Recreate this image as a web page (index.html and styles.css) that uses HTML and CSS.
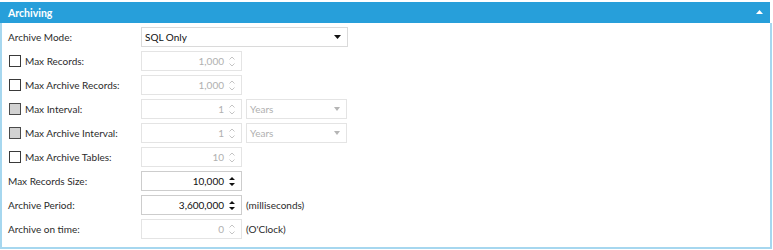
FILE: index.html
```html
<!DOCTYPE html>
<html>
<head>
	<meta charset="utf-8">
	<link rel="stylesheet" href="styles.css">
</head>
<body>
	<div class="panel">
		<div class="panel-head">
			<span>Archiving</span>
			<svg class="collapse" width="7" height="4" viewBox="0 0 7 4"><path d="M0 4 L3.5 0 L7 4 Z" fill="#fff"/></svg>
		</div>
		<div class="panel-body">
			<div class="row">
				<label class="lbl">Archive Mode:</label>
				<div class="select wide">
					<span>SQL Only</span>
					<svg width="7" height="4" viewBox="0 0 7 4"><path d="M0 0 L7 0 L3.5 4 Z" fill="#111"/></svg>
				</div>
			</div>
			<div class="row">
				<label class="lbl"><span class="check"></span>Max Records:</label>
				<div class="spin off">
					<span class="val">1,000</span>
					<svg width="6" height="11" viewBox="0 0 6 11"><path d="M0.5 3.5 L3 1 L5.5 3.5 M0.5 7.5 L3 10 L5.5 7.5" fill="none" stroke="#c4c4c4"/></svg>
				</div>
			</div>
			<div class="row">
				<label class="lbl"><span class="check"></span>Max Archive Records:</label>
				<div class="spin off">
					<span class="val">1,000</span>
					<svg width="6" height="11" viewBox="0 0 6 11"><path d="M0.5 3.5 L3 1 L5.5 3.5 M0.5 7.5 L3 10 L5.5 7.5" fill="none" stroke="#c4c4c4"/></svg>
				</div>
			</div>
			<div class="row">
				<label class="lbl"><span class="check grey"></span>Max Interval:</label>
				<div class="spin off">
					<span class="val">1</span>
					<svg width="6" height="11" viewBox="0 0 6 11"><path d="M0.5 3.5 L3 1 L5.5 3.5 M0.5 7.5 L3 10 L5.5 7.5" fill="none" stroke="#c4c4c4"/></svg>
				</div>
				<div class="select unit off">
					<span>Years</span>
					<svg width="6" height="4" viewBox="0 0 6 4"><path d="M0 0 L6 0 L3 4 Z" fill="#b5b5b5"/></svg>
				</div>
			</div>
			<div class="row">
				<label class="lbl"><span class="check grey"></span>Max Archive Interval:</label>
				<div class="spin off">
					<span class="val">1</span>
					<svg width="6" height="11" viewBox="0 0 6 11"><path d="M0.5 3.5 L3 1 L5.5 3.5 M0.5 7.5 L3 10 L5.5 7.5" fill="none" stroke="#c4c4c4"/></svg>
				</div>
				<div class="select unit off">
					<span>Years</span>
					<svg width="6" height="4" viewBox="0 0 6 4"><path d="M0 0 L6 0 L3 4 Z" fill="#b5b5b5"/></svg>
				</div>
			</div>
			<div class="row">
				<label class="lbl"><span class="check"></span>Max Archive Tables:</label>
				<div class="spin off">
					<span class="val">10</span>
					<svg width="6" height="11" viewBox="0 0 6 11"><path d="M0.5 3.5 L3 1 L5.5 3.5 M0.5 7.5 L3 10 L5.5 7.5" fill="none" stroke="#c4c4c4"/></svg>
				</div>
			</div>
			<div class="row">
				<label class="lbl">Max Records Size:</label>
				<div class="spin">
					<span class="val">10,000</span>
					<svg width="6" height="11" viewBox="0 0 6 11"><path d="M0 4 L3 1 L6 4 Z M0 7 L6 7 L3 10 Z" fill="#111"/></svg>
				</div>
			</div>
			<div class="row">
				<label class="lbl">Archive Period:</label>
				<div class="spin">
					<span class="val">3,600,000</span>
					<svg width="6" height="11" viewBox="0 0 6 11"><path d="M0 4 L3 1 L6 4 Z M0 7 L6 7 L3 10 Z" fill="#111"/></svg>
				</div>
				<span class="note">(milliseconds)</span>
			</div>
			<div class="row">
				<label class="lbl">Archive on time:</label>
				<div class="spin off">
					<span class="val">0</span>
					<svg width="6" height="11" viewBox="0 0 6 11"><path d="M0.5 3.5 L3 1 L5.5 3.5 M0.5 7.5 L3 10 L5.5 7.5" fill="none" stroke="#c4c4c4"/></svg>
				</div>
				<span class="note">(O'Clock)</span>
			</div>
		</div>
	</div>
</body>
</html>
```

FILE: styles.css
```css
body, html {
	margin: 0;
	padding: 0;
	background: #fff;
}

body {
	padding-top: 2px;
	font-family: "Lato", "Open Sans", sans-serif;
	font-size: 10px;
	color: #2b2b2b;
}

.panel {
	width: 772px;
}

.panel-head {
	display: flex;
	align-items: center;
	justify-content: space-between;
	height: 21px;
	margin-right: 2px;
	padding: 0 7px 0 8px;
	background: #279fda;
	color: #fff;
	font-size: 10.5px;
	font-weight: bold;
}

.collapse {
	margin-top: -2px;
}

.panel-body {
	border: 2px solid #a6d7ef;
	border-top: 0;
	padding: 2px 0 6px 6px;
}

.row {
	display: flex;
	align-items: center;
	height: 24px;
}

.lbl {
	display: flex;
	align-items: center;
	width: 133px;
	flex: none;
}

.check {
	width: 10px;
	height: 10px;
	margin: 0 4px 0 1px;
	border: 1px solid #3a3a3a;
	background: #fff;
}

.check.grey {
	background: #d2d2d2;
	border-color: #4a4a4a;
}

.select, .spin {
	display: flex;
	align-items: center;
	box-sizing: border-box;
	height: 20px;
	border: 1px solid #cdcdcd;
	background: #fff;
}

.select {
	justify-content: space-between;
	padding: 0 6px 0 3px;
}

.select.wide {
	width: 207px;
	border-color: #dadada;
	color: #111;
}

.select.unit {
	width: 101px;
	margin-left: 4px;
}

.spin {
	justify-content: flex-end;
	width: 101px;
	padding-right: 6px;
	color: #111;
}

.spin .val {
	margin-right: 5px;
}

.off {
	border-color: #e4e4e4;
	color: #b0b0b0;
}

.note {
	margin-left: 4px;
}
```
